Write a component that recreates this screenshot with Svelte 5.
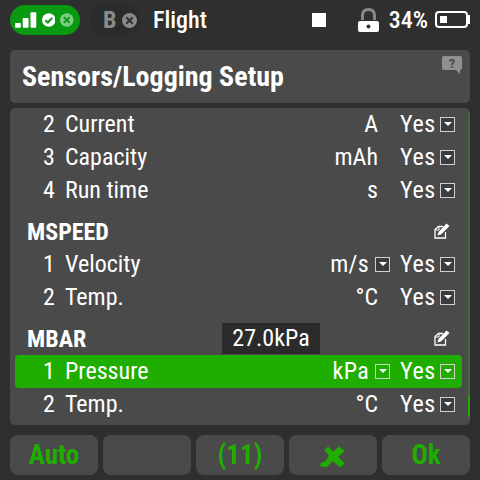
<script>
	const sections = [
		{
			rows: [
				{ n: 2, label: 'Current', unit: 'A' },
				{ n: 3, label: 'Capacity', unit: 'mAh' },
				{ n: 4, label: 'Run time', unit: 's' }
			]
		},
		{
			name: 'MSPEED',
			rows: [
				{ n: 1, label: 'Velocity', unit: 'm/s', pick: true },
				{ n: 2, label: 'Temp.', unit: '°C' }
			]
		},
		{
			name: 'MBAR',
			rows: [
				{ n: 1, label: 'Pressure', unit: 'kPa', pick: true, active: true },
				{ n: 2, label: 'Temp.', unit: '°C' }
			]
		}
	];
</script>

{#snippet caret()}
	<span class="caret"><i></i></span>
{/snippet}

{#snippet edit()}
	<svg class="edit" viewBox="0 0 16 16" width="16" height="16">
		<path d="M9 3.5H4.5L1 6.5V15H11.5V9" fill="none" stroke="#fff" stroke-width="1.3"/>
		<path d="M1 7H5V3.5" fill="none" stroke="#fff" stroke-width="1"/>
		<path d="M3.5 12.5L4.5 9L12.5 0.5L15.5 3L7 11.5Z" fill="#fff"/>
	</svg>
{/snippet}

<div class="screen">
	<header class="top">
		<div class="pill">
			<svg width="32" height="18" viewBox="0 0 32 18">
				<rect x="0" y="12" width="6" height="5" rx="1" fill="#fff"/>
				<rect x="8" y="7" width="6" height="10" rx="1" fill="#fff"/>
				<rect x="16" y="1" width="6" height="16" rx="1" fill="#fff"/>
			</svg>
			<svg class="dot" width="14" height="14" viewBox="0 0 14 14">
				<circle cx="7" cy="7" r="7" fill="#fff"/>
				<path d="M3.5 7.2L6 9.6L10.5 4.8" fill="none" stroke="#0a9a12" stroke-width="2"/>
			</svg>
			<svg class="dot" width="14" height="14" viewBox="0 0 14 14">
				<circle cx="7" cy="7" r="7" fill="#7fcc85"/>
				<path d="M4 4L10 10M10 4L4 10" stroke="#0a9a12" stroke-width="2"/>
			</svg>
		</div>
		<div class="ext">
			<span class="ext-b">B</span>
			<svg width="15" height="15" viewBox="0 0 14 14">
				<circle cx="7" cy="7" r="7" fill="#8a8a8a"/>
				<path d="M4 4L10 10M10 4L4 10" stroke="#333" stroke-width="2"/>
			</svg>
		</div>
		<span class="model">Flight</span>
		<span class="stop"></span>
		<svg class="lock" width="21" height="24" viewBox="0 0 21 24">
			<path d="M4.5 12V7.5C4.5 3.5 6.5 1.5 10.5 1.5S16.5 3.5 16.5 7.5V12" fill="none" stroke="#888" stroke-width="3"/>
			<rect x="0" y="13" width="21" height="11" rx="2" fill="#fff"/>
			<circle cx="10.5" cy="18.5" r="2" fill="#333"/>
		</svg>
		<span class="pct">34%</span>
		<span class="batt"><i></i></span>
	</header>

	<div class="title">
		<h1>Sensors/Logging Setup</h1>
		<svg class="help" width="20" height="18" viewBox="0 0 20 18">
			<path d="M2 0H18A2 2 0 0 1 20 2V12A2 2 0 0 1 18 14V18L14 14H2A2 2 0 0 1 0 12V2A2 2 0 0 1 2 0Z" fill="#8f8f8f"/>
			<text x="10" y="11.5" text-anchor="middle" class="help-q">?</text>
		</svg>
	</div>

	<main class="list">
		<div class="track"><i></i></div>
		<div class="bubble">27.0kPa</div>
		{#each sections as section}
			<section>
				{#if section.name}
					<div class="head">
						<strong>{section.name}</strong>
						{@render edit()}
					</div>
				{/if}
				{#each section.rows as row}
					<div class="row" class:active={row.active}>
						<span class="num">{row.n}</span>
						<span class="label">{row.label}</span>
						<span class="unit" class:picked={row.pick}>{row.unit}</span>
						{#if row.pick}{@render caret()}{/if}
						<span class="yes">Yes</span>
						{@render caret()}
					</div>
				{/each}
			</section>
		{/each}
	</main>

	<footer class="bar">
		<button>Auto</button>
		<button></button>
		<button>(11)</button>
		<button aria-label="Close">
			<svg class="cross" width="27" height="24" viewBox="24 14 82 72">
				<path d="M40 28L52 18L66 34L85 18L102 32L82 50L102 70L88 82L66 62L48 80L28 78L28 70L44 62L54 46Z" fill="#1fae00"/>
			</svg>
		</button>
		<button>Ok</button>
	</footer>
</div>

<style>
	:global(body) {
		margin: 0;
		background: #2f2f2f;
	}
	.screen {
		width: 480px;
		height: 480px;
		box-sizing: border-box;
		padding: 0 10px 5px;
		display: flex;
		flex-direction: column;
		font-family: Roboto, "Liberation Sans", sans-serif;
		font-stretch: 85%;
		color: #fff;
		overflow: hidden;
	}

	.top {
		height: 50px;
		padding-bottom: 10px;
		box-sizing: border-box;
		display: flex;
		align-items: center;
		flex-shrink: 0;
	}
	.pill {
		width: 70px;
		height: 30px;
		border-radius: 15px;
		background: #0a9a12;
		display: flex;
		align-items: center;
		padding-left: 5px;
		box-sizing: border-box;
	}
	.pill .dot { margin-left: -1px; margin-right: 6px; }
	.pill svg:first-child { margin-left: 0; margin-right: -3px; }
	.ext {
		width: 50px;
		height: 30px;
		margin-left: 10px;
		background: #2b2b2b;
		border-radius: 15px;
		display: flex;
		align-items: center;
		box-sizing: border-box;
		padding-left: 13px;
		gap: 6px;
	}
	.ext-b {
		font-size: 24px;
		font-weight: 700;
		color: #8a8a8a;
	}
	.model {
		font-size: 24px;
		font-weight: 500;
		margin-left: 13px;
	}
	.stop {
		width: 14px;
		height: 14px;
		background: #fff;
		margin-left: auto;
		margin-right: 32px;
	}
	.lock { margin-right: 10px; }
	.pct {
		font-size: 24px;
		font-weight: 500;
		margin-right: 7px;
	}
	.batt {
		position: relative;
		width: 33px;
		height: 17px;
		box-sizing: border-box;
		border: 2px solid #fff;
		border-radius: 4px;
		margin: -1px 2px 0 0;
		display: flex;
		align-items: center;
		padding-left: 3px;
	}
	.batt i {
		width: 7px;
		height: 7px;
		background: #fff;
	}
	.batt::after {
		content: "";
		position: absolute;
		right: -4px;
		top: 2px;
		width: 2px;
		height: 9px;
		background: #fff;
	}

	.title {
		height: 53px;
		background: #4a4a4a;
		border-radius: 5px;
		display: flex;
		align-items: center;
		justify-content: space-between;
		padding: 0 8px 0 12px;
		flex-shrink: 0;
		box-sizing: border-box;
	}
	.title h1 {
		margin: 0;
		font-size: 28px;
		font-weight: 700;
		line-height: 1;
	}
	.help {
		align-self: flex-start;
		margin-top: 6px;
	}
	.help-q {
		font: 700 12px Roboto, sans-serif;
		fill: #444;
	}

	.list {
		position: relative;
		margin-top: 5px;
		height: 317px;
		background: #4a4a4a;
		border-radius: 5px;
		padding-left: 5px;
		padding-right: 8px;
		box-sizing: border-box;
		flex-shrink: 0;
		overflow: hidden;
	}
	section + section { margin-top: 8px; }
	.track {
		position: absolute;
		top: 5px;
		right: 0;
		height: 307px;
		width: 2px;
		background: #43693a;
	}
	.track i {
		position: absolute;
		left: 0;
		right: 0;
		top: 283px;
		height: 20px;
		background: #1fae00;
	}
	.bubble {
		position: absolute;
		left: 212px;
		top: 215px;
		width: 98px;
		height: 31px;
		background: #2b2b2b;
		font-size: 24px;
		line-height: 31px;
		text-align: center;
		z-index: 2;
	}

	.head {
		height: 33px;
		display: flex;
		align-items: center;
		justify-content: space-between;
		padding: 0 7px 0 12px;
		font-size: 24px;
	}
	.head strong { font-weight: 700; }
	.edit { margin: -2px 5px 0 0; }

	.row {
		height: 33px;
		display: flex;
		align-items: center;
		padding: 0 7px 0 28px;
		font-size: 24px;
		line-height: 33px;
		border-radius: 4px;
	}
	.row.active { background: #1fae00; }
	.num { width: 22px; }
	.label { flex: 1; }
	.unit { margin-right: 22px; }
	.unit.picked { margin-right: 6px; letter-spacing: 0.3px; }
	.yes { width: 35px; margin-right: 5px; letter-spacing: 0.6px; }
	.unit.picked + .caret { margin-right: 10px; }

	.caret {
		flex: none;
		width: 15px;
		height: 15px;
		box-sizing: border-box;
		border: 1px solid #d0d0d0;
		background: #3c3c3c;
		display: flex;
		justify-content: center;
		padding-top: 4px;
	}
	.active .caret { background: #1fae00; }
	.caret i {
		width: 0;
		height: 0;
		border-left: 4px solid transparent;
		border-right: 4px solid transparent;
		border-top: 4px solid #fff;
	}

	.bar {
		margin-top: 10px;
		height: 40px;
		display: grid;
		grid-template-columns: repeat(5, 88px);
		gap: 5px;
		flex-shrink: 0;
	}
	.bar button {
		background: #4a4a4a;
		border: 0;
		border-radius: 8px;
		padding: 0;
		color: #1fae00;
		font: 700 27px Roboto, sans-serif;
		font-stretch: 85%;
		display: flex;
		align-items: center;
		justify-content: center;
	}
	.cross { margin: 3px 2px 0 0; }
</style>
